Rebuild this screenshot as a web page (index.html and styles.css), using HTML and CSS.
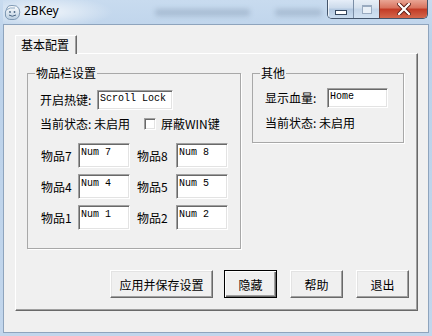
FILE: index.html
```html
<!DOCTYPE html>
<html>
<head>
<meta charset="utf-8">
<link rel="stylesheet" href="styles.css">
</head>
<body>
<div class="window">
  <div class="titlebar">
    <svg class="appicon" width="17" height="17" viewBox="0 0 17 17">
      <defs>
        <linearGradient id="ig" x1="0" y1="0" x2="0" y2="1">
          <stop offset="0" stop-color="#ffffff"/>
          <stop offset="1" stop-color="#b8cde0"/>
        </linearGradient>
      </defs>
      <path d="M3 4 Q4 1 8 1.5 Q13 1 15 4.5 Q16.5 8 15 12 Q13 16 8 15.5 Q3 16 1.5 12 Q0.5 8 3 4 Z" fill="url(#ig)" stroke="#7d98b3" stroke-width="1"/>
      <path d="M2 6 Q6 3 11 4" fill="none" stroke="#8fa9c2" stroke-width="1"/>
      <circle cx="6" cy="8" r="0.9" fill="#4a6684"/>
      <circle cx="10.5" cy="8" r="0.9" fill="#4a6684"/>
      <path d="M5 11 Q8 13.5 12 11" fill="none" stroke="#4a6684" stroke-width="1"/>
    </svg>
    <span class="title">2BKey</span>
    <span class="spacer"></span>
    <span class="glass glass1"></span>
    <span class="glass glass2"></span>
    <div class="caption">
      <div class="cbtn cmin"><span class="minbar"></span></div>
      <div class="cbtn cmax"><span class="maxbox"></span></div>
      <div class="cbtn cclose">
        <svg width="14" height="12" viewBox="0 0 14 12">
          <path d="M2 1 L12 11 M12 1 L2 11" stroke="#5a1a12" stroke-width="4" stroke-linecap="square"/>
          <path d="M2 1 L12 11 M12 1 L2 11" stroke="#ffffff" stroke-width="2.2" stroke-linecap="square"/>
        </svg>
      </div>
    </div>
  </div>
  <div class="client">
    <div class="tabs"><div class="tab">基本配置</div></div>
    <div class="panel">
      <div class="groups">
        <fieldset class="group g1">
          <legend>物品栏设置</legend>
          <div class="gbody g1body">
            <div class="row r1">
              <span class="lbl hk">开启热键:</span>
              <span class="edit ehk">Scroll Lock</span>
            </div>
            <div class="row r2">
              <span class="lbl">当前状态: 未启用</span>
              <span class="check"></span>
              <span class="lbl cklbl">屏蔽WIN键</span>
            </div>
            <div class="items">
              <span class="ilbl">物品7</span><span class="edit item">Num 7</span>
              <span class="ilbl ilbl2">物品8</span><span class="edit item">Num 8</span>
              <span class="ilbl">物品4</span><span class="edit item">Num 4</span>
              <span class="ilbl ilbl2">物品5</span><span class="edit item">Num 5</span>
              <span class="ilbl">物品1</span><span class="edit item">Num 1</span>
              <span class="ilbl ilbl2">物品2</span><span class="edit item">Num 2</span>
            </div>
          </div>
        </fieldset>
        <fieldset class="group g2">
          <legend>其他</legend>
          <div class="gbody g2body">
            <div class="row r1">
              <span class="lbl hp">显示血量:</span>
              <span class="edit ehp">Home</span>
            </div>
            <div class="row r3">
              <span class="lbl">当前状态: 未启用</span>
            </div>
          </div>
        </fieldset>
      </div>
      <div class="buttons">
        <button class="btn wide">应用并保存设置</button>
        <button class="btn def">隐藏</button>
        <button class="btn">帮助</button>
        <button class="btn">退出</button>
      </div>
    </div>
  </div>
</div>
</body>
</html>
```
FILE: styles.css
```css
html, body {
  margin: 0;
  padding: 0;
}
body {
  font-family: "Noto Sans CJK SC", "Noto Sans", sans-serif;
  font-size: 12px;
  color: #000;
  background: #c3d7ec;
}
.window {
  width: 432px;
  height: 336px;
  box-sizing: border-box;
  padding: 0 3px 3px 3px;
  display: flex;
  flex-direction: column;
  background: linear-gradient(to bottom, #c8dbef 0px, #bcd2ea 40px, #c2d6ec 100%);
}
.titlebar {
  height: 24px;
  flex: none;
  display: flex;
  align-items: flex-start;
  background: radial-gradient(ellipse 70px 16px at 40px 12px, rgba(255,255,255,0.75), rgba(255,255,255,0) 100%);
}
.appicon {
  margin: 4px 0 0 1px;
  flex: none;
}
.title {
  font-family: "Noto Sans", "Open Sans", sans-serif;
  font-size: 12px;
  line-height: 16px;
  margin: 3px 0 0 3px;
  color: #000;
}
.spacer {
  flex: 1;
}
.glass {
  height: 7px;
  margin-top: 9px;
  background: rgba(70, 90, 120, 0.22);
  filter: blur(2.5px);
  border-radius: 3px;
}
.glass1 {
  width: 95px;
  margin-right: 25px;
}
.glass2 {
  width: 47px;
  margin-right: 5px;
}
.caption {
  display: flex;
  height: 19px;
  box-sizing: border-box;
  border: 1px solid #44556b;
  border-top: none;
  border-radius: 0 0 5px 5px;
  overflow: hidden;
  margin-right: 1px;
  flex: none;
}
.cbtn {
  height: 100%;
  display: flex;
  align-items: center;
  justify-content: center;
  box-sizing: border-box;
}
.cmin {
  width: 26px;
  border-right: 1px solid #7b8ea6;
  background: linear-gradient(to bottom, #e6eef8 0%, #cbdaeb 45%, #b3c8e0 50%, #c9dcef 100%);
  box-shadow: inset 1px 0 rgba(255,255,255,0.7);
}
.minbar {
  width: 10px;
  height: 3px;
  margin-top: 6px;
  background: #fff;
  border: 1px solid #35475e;
}
.cmax {
  width: 26px;
  border-right: 1px solid #7a3a30;
  background: linear-gradient(to bottom, #e8eff7 0%, #d4e0ed 45%, #c4d5e8 50%, #d2e2f2 100%);
}
.maxbox {
  width: 8px;
  height: 6px;
  border: 1px solid #9aabc0;
  border-top-width: 2px;
  background: #e9f0f7;
}
.cclose {
  width: 47px;
  background: linear-gradient(to bottom, #e9a594 0%, #d8715c 45%, #c23a25 50%, #d4674c 100%);
}
.client {
  flex: 1;
  border: 1px solid #8ea4bd;
  background: #f0f0f0;
  padding: 10px 10px 0 11px;
  display: flex;
  flex-direction: column;
}
.tabs {
  display: flex;
}
.tab {
  position: relative;
  z-index: 1;
  width: 62px;
  height: 19px;
  box-sizing: border-box;
  border-top: 1px solid #fff;
  border-left: 1px solid #fff;
  border-right: 1px solid #696969;
  box-shadow: inset -1px 0 #a0a0a0;
  background: #f0f0f0;
  padding-left: 5px;
  line-height: 17px;
  margin-bottom: -1px;
}
.panel {
  border-top: 1px solid #fff;
  border-left: 1px solid #fff;
  border-right: 1px solid #696969;
  border-bottom: 1px solid #696969;
  box-shadow: inset -1px -1px #a0a0a0;
  padding: 12px 8px 12px 11px;
}
.groups {
  display: flex;
  align-items: flex-start;
}
.group {
  margin: 0;
  padding: 0;
  min-width: 0;
  box-sizing: border-box;
  border: 1px solid #a8a8a8;
  box-shadow: 1px 1px 0 #fff;
}
.group legend {
  margin-left: 7px;
  padding: 0 1px;
  line-height: 14px;
}
.g1 {
  width: 214px;
}
.g2 {
  width: 152px;
  margin-left: 11px;
}
.g1body {
  padding: 10px 0 18px 12px;
}
.g2body {
  padding: 8px 0 12px 12px;
}
.row {
  display: flex;
  align-items: center;
}
.r1 {
  height: 20px;
}
.r2 {
  height: 16px;
  margin-top: 6px;
}
.r3 {
  height: 14px;
  margin-top: 8px;
}
.lbl {
  line-height: 14px;
  white-space: nowrap;
}
.hk {
  width: 57px;
}
.hp {
  width: 62px;
}
.edit {
  box-sizing: border-box;
  background: #fff;
  border: 1px solid;
  border-color: #a0a0a0 #fff #fff #a0a0a0;
  box-shadow: inset 1px 1px 0 #696969, inset -1px -1px 0 #e3e3e3;
  font-family: "Liberation Mono", monospace;
  font-size: 10px;
  line-height: 12px;
  padding: 2px 0 0 2px;
  white-space: pre;
  color: #000;
}
.ehk {
  width: 76px;
  height: 20px;
}
.ehp {
  width: 61px;
  height: 20px;
}
.check {
  width: 12px;
  height: 12px;
  box-sizing: border-box;
  margin-left: 14px;
  background: #fff;
  border: 1px solid;
  border-color: #a0a0a0 #fff #fff #a0a0a0;
  box-shadow: inset 1px 1px 0 #696969, inset -1px -1px 0 #e3e3e3;
}
.cklbl {
  margin-left: 5px;
}
.items {
  margin-top: 11px;
  margin-left: 1px;
  display: grid;
  grid-template-columns: 37px 52px 46px 52px;
  grid-auto-rows: 25px;
  row-gap: 6px;
  align-items: center;
}
.ilbl {
  line-height: 14px;
  white-space: nowrap;
}
.ilbl2 {
  padding-left: 7px;
}
.item {
  height: 25px;
  padding-top: 3px;
}
.buttons {
  display: flex;
  justify-content: flex-end;
  margin-top: 21px;
}
.btn {
  height: 28px;
  width: 53px;
  box-sizing: border-box;
  margin: 0;
  padding: 0;
  font-family: "Noto Sans CJK SC", sans-serif;
  font-size: 12px;
  color: #000;
  background: #f0f0f0;
  border: 1px solid;
  border-color: #fff #696969 #696969 #fff;
  box-shadow: inset -1px -1px 0 #a0a0a0, inset 1px 1px 0 #e3e3e3;
  border-radius: 0;
}
.btn + .btn {
  margin-left: 13px;
}
.btn.wide {
  width: 103px;
}
.btn.def {
  margin-left: 11px;
  border-color: #000;
  box-shadow: inset 1px 1px 0 #fff, inset -1px -1px 0 #696969, inset -2px -2px 0 #a0a0a0;
}
```
